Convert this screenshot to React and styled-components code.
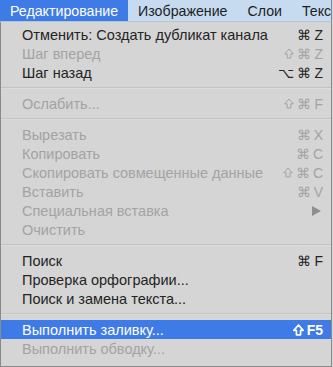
import React from 'react';
import styled, { createGlobalStyle } from 'styled-components';

const Global = createGlobalStyle`
  html, body {
    margin: 0;
    padding: 0;
    background: #d5d5d5;
  }
  body {
    font-family: "Liberation Sans", Arial, sans-serif;
    -webkit-font-smoothing: antialiased;
  }
`;

const Screen = styled.div`
  width: 332px;
  height: 367px;
  overflow: hidden;
  display: flex;
  flex-direction: column;
`;

const MenuBar = styled.div`
  height: 21px;
  display: flex;
  align-items: stretch;
  background: #c6dbef;
  border-bottom: 1px solid #b9c4cf;
  border-right: 1px solid #7d8790;
  white-space: nowrap;
  overflow: hidden;
`;

const BarItem = styled.div`
  display: flex;
  align-items: center;
  padding: 0 10px;
  font-size: 14.2px;
  color: ${p => (p.$active ? '#ffffff' : '#1e1e1e')};
  background: ${p => (p.$active ? '#3f7be6' : 'transparent')};
`;

const Panel = styled.div`
  flex: 1;
  background: #d5d5d5;
  border-left: 1px solid #8a8a8a;
  border-right: 1px solid #8a8a8a;
  border-bottom: 1px solid #8a8a8a;
  padding-top: 3px;
  box-sizing: border-box;
`;

const Row = styled.div`
  height: 19px;
  display: flex;
  align-items: center;
  justify-content: space-between;
  padding: 0 8px 0 21px;
  font-size: 14.5px;
  color: ${p => (p.$selected ? '#ffffff' : p.$disabled ? '#a3a3a3' : '#242424')};
  background: ${p => (p.$selected ? '#3f7be6' : 'transparent')};
  white-space: nowrap;
`;

const Keys = styled.span`
  display: flex;
  align-items: center;
  gap: 3px;
  font-size: 14px;
  font-weight: ${p => (p.$bold ? 700 : 400)};
`;

const Arrow = styled.span`
  width: 0;
  height: 0;
  border-top: 5px solid transparent;
  border-bottom: 5px solid transparent;
  border-left: 9px solid #8e8e8e;
  margin-right: 2px;
`;

const Divider = styled.div`
  height: 1px;
  margin: 5px 0 5px;
  background: #c3c3c3;
  border-bottom: 1px solid #dcdcdc;
`;

const ShiftIcon = ({ bold }) => (
  <svg width={bold ? 11 : 10} height={bold ? 12 : 11} viewBox="0 0 10 11" aria-hidden="true">
    <path
      d="M5 1 L9.3 5.8 H6.9 V10 H3.1 V5.8 H0.7 Z"
      fill="none"
      stroke="currentColor"
      strokeWidth={bold ? 1.5 : 1}
      strokeLinejoin="round"
    />
  </svg>
);

const groups = [
  [
    { label: 'Отменить: Создать дубликат канала', keys: ['⌘', 'Z'] },
    { label: 'Шаг вперед', keys: ['⇧', '⌘', 'Z'], disabled: true },
    { label: 'Шаг назад', keys: ['⌥', '⌘', 'Z'] },
  ],
  [{ label: 'Ослабить...', keys: ['⇧', '⌘', 'F'], disabled: true }],
  [
    { label: 'Вырезать', keys: ['⌘', 'X'], disabled: true },
    { label: 'Копировать', keys: ['⌘', 'C'], disabled: true },
    { label: 'Скопировать совмещенные данные', keys: ['⇧', '⌘', 'C'], disabled: true },
    { label: 'Вставить', keys: ['⌘', 'V'], disabled: true },
    { label: 'Специальная вставка', submenu: true, disabled: true },
    { label: 'Очистить', disabled: true },
  ],
  [
    { label: 'Поиск', keys: ['⌘', 'F'] },
    { label: 'Проверка орфографии...' },
    { label: 'Поиск и замена текста...' },
  ],
  [
    { label: 'Выполнить заливку...', keys: ['⇧', 'F5'], selected: true },
    { label: 'Выполнить обводку...', disabled: true },
  ],
];

const App = () => {
  return (
    <Screen>
      <Global />
      <MenuBar>
        <BarItem $active>Редактирование</BarItem>
        <BarItem>Изображение</BarItem>
        <BarItem>Слои</BarItem>
        <BarItem>Текст</BarItem>
      </MenuBar>
      <Panel>
        {groups.map((group, gi) => (
          <React.Fragment key={gi}>
            {gi > 0 && <Divider />}
            {group.map(item => (
              <Row key={item.label} $disabled={item.disabled} $selected={item.selected}>
                <span>{item.label}</span>
                {item.submenu ? (
                  <Arrow />
                ) : (
                  item.keys && (
                    <Keys $bold={item.selected}>
                      {item.keys.map(k =>
                        k === '⇧' ? <ShiftIcon key={k} bold={item.selected} /> : <span key={k}>{k}</span>
                      )}
                    </Keys>
                  )
                )}
              </Row>
            ))}
          </React.Fragment>
        ))}
      </Panel>
    </Screen>
  );
};

export default App;
